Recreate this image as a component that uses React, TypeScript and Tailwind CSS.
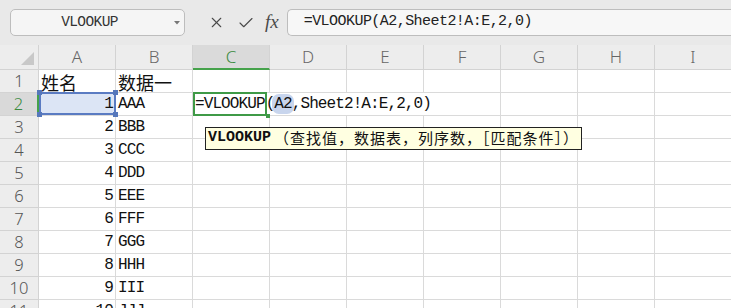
import { X, Check } from "lucide-react";

const COLS = ["A", "B", "C", "D", "E", "F", "G", "H", "I"];
const DATA = ["AAA", "BBB", "CCC", "DDD", "EEE", "FFF", "GGG", "HHH", "III", "JJJ"];

const mono = "font-['Liberation_Mono','Noto_Sans_CJK_SC',monospace]";
const cjk = "font-['Noto_Sans_CJK_SC','Noto_Sans',sans-serif]";

function Toolbar() {
  return (
    <div className="h-[45px] bg-[#e9e9e9] flex items-start pt-[9px]">
      {/* name box */}
      <div className="ml-[10px] w-[175px] h-[27px] rounded-[5px] border border-[#bdbdbd] bg-[#f5f5f5] flex items-center">
        <span className={`flex-1 text-center pr-[2px] text-[14.5px] tracking-[-0.6px] text-[#333] ${mono}`}>VLOOKUP</span>
        <span className="w-[14px] flex justify-center">
          <svg width="6" height="4" viewBox="0 0 6 4">
            <path d="M0 0 L6 0 L3 3.5 Z" fill="#777" />
          </svg>
        </span>
      </div>
      {/* edit icons */}
      <div className="ml-[23px] h-[27px] flex items-center gap-[12px] text-[#4a4a4a]">
        <X size={17} strokeWidth={1.5} />
        <Check size={18} strokeWidth={1.5} />
        <span className="font-['Liberation_Serif',serif] italic text-[19px] leading-none -mt-[3px] ml-[-2px]">fx</span>
      </div>
      {/* formula input */}
      <div className="ml-[8px] flex-1 h-[27px] rounded-l-[5px] border border-r-0 border-[#bdbdbd] bg-[#f7f7f7] flex items-center pl-[16px]">
        <span className={`text-[15px] tracking-[-0.55px] text-[#222] ${mono}`}>=VLOOKUP(A2,Sheet2!A:E,2,0)</span>
      </div>
    </div>
  );
}

function ColHeader({ label }: { label: string }) {
  const active = label === "C";
  return (
    <div
      className={`flex items-center justify-center border-r border-[#d3d3d3] font-['Noto_Sans',sans-serif] font-light text-[17px] ${
        active
          ? "bg-[#dadada] text-[#3a8a3e] border-b-2 border-b-[#45a24b]"
          : "bg-[#ededed] text-[#666] border-b border-b-[#d3d3d3]"
      }`}
    >
      {label}
    </div>
  );
}

function RowHeader({ n }: { n: number }) {
  const active = n === 2;
  return (
    <div
      className={`flex items-center justify-center border-b border-[#d3d3d3] font-['Noto_Sans',sans-serif] font-light text-[16.5px] ${
        active
          ? "bg-[#d9d9d9] text-[#3a8a3e] border-r-2 border-r-[#45a24b]"
          : "bg-[#ededed] text-[#555] border-r border-r-[#d3d3d3]"
      }`}
    >
      {n}
    </div>
  );
}

function Handle({ pos }: { pos: string }) {
  return <span className={`absolute w-[5px] h-[5px] bg-[#5577bb] ${pos}`} />;
}

function Cell({ r, c }: { r: number; c: number }) {
  const base = "border-r border-b border-[#dadada] flex items-center text-[#111]";

  if (r === 1 && c === 0)
    return <div className={`${base} pl-[2px] pt-[2px] text-[18px] ${cjk}`}>姓名</div>;
  if (r === 1 && c === 1)
    return <div className={`${base} pl-[2px] pt-[2px] text-[18px] ${cjk}`}>数据一</div>;

  if (r >= 2 && c === 0) {
    const selected = r === 2;
    return (
      <div
        className={`${base} justify-end pr-[2px] text-[16px] tracking-[-0.9px] ${mono} ${
          selected ? "relative bg-[#dce5f5]" : ""
        }`}
      >
        {r - 1}
        {selected && (
          <>
            <span className="absolute left-0 top-[-1px] right-[-1px] bottom-0 border-2 border-[#5a7bc2]" />
            <Handle pos="left-[-2px] top-[-3px]" />
            <Handle pos="right-[-3px] top-[-3px]" />
            <Handle pos="left-[-2px] bottom-[-2px]" />
            <Handle pos="right-[-3px] bottom-[-2px]" />
          </>
        )}
      </div>
    );
  }
  if (r >= 2 && c === 1)
    return <div className={`${base} pl-[2px] text-[16px] tracking-[-0.9px] ${mono}`}>{DATA[r - 2]}</div>;

  if (r === 2 && c === 2) {
    return (
      <div className={`${base} relative z-10`}>
        <div className="absolute left-0 top-0 h-[22px] w-[307px] bg-white flex items-center pl-[2px]">
          <span className={`whitespace-nowrap text-[16px] tracking-[-0.9px] text-[#111] ${mono}`}>
            =VLOOKUP
            <span className="inline-block w-[1px] h-[18px] bg-black align-middle -mt-[2px]" />
            (
            <span className="bg-[#c8d5ed] rounded-[7px] px-[2px] -mx-[2px] py-[1px]">A2</span>
            ,Sheet2!A:E,2,0)
          </span>
        </div>
        <span className="absolute left-0 top-[-1px] w-[74px] h-[24px] border-2 border-[#3f9a47]" />
        <span className="absolute left-[73px] top-[21px] w-[4px] h-[4px] bg-[#3f9a47]" />
      </div>
    );
  }

  return <div className={base} />;
}

function Sheet() {
  const rows = Array.from({ length: 11 }, (_, i) => i + 1);
  return (
    <div className="grid grid-cols-[39px_repeat(9,77px)] grid-rows-[25px_repeat(11,23px)] bg-white">
      <div className="bg-[#ededed] border-r border-b border-[#d3d3d3] flex items-end justify-end pr-[4px] pb-[4px]">
        <svg width="13" height="13" viewBox="0 0 13 13">
          <path d="M13 0 L13 13 L0 13 Z" fill="#c8c8c8" />
        </svg>
      </div>
      {COLS.map((c) => (
        <ColHeader key={c} label={c} />
      ))}
      {rows.map((r) => (
        <div key={r} className="contents">
          <RowHeader n={r} />
          {COLS.map((_, ci) => (
            <Cell key={ci} r={r} c={ci} />
          ))}
        </div>
      ))}
    </div>
  );
}

export default function App() {
  return (
    <div className="relative w-[731px] h-[308px] overflow-hidden bg-white">
      <Toolbar />
      <Sheet />
      {/* argument hint tooltip */}
      <div className="absolute left-[205px] top-[127px] h-[23px] border border-[#222] bg-[#ffffe1] flex items-center px-[2px] z-20 whitespace-nowrap">
        <span className="font-['Liberation_Mono',monospace] font-bold text-[15px] text-[#111]">VLOOKUP</span>
        <span className={`ml-[3px] text-[15px] tracking-[1px] text-[#111] ${cjk}`}>（查找值，数据表，列序数，［匹配条件］）</span>
      </div>
    </div>
  );
}
